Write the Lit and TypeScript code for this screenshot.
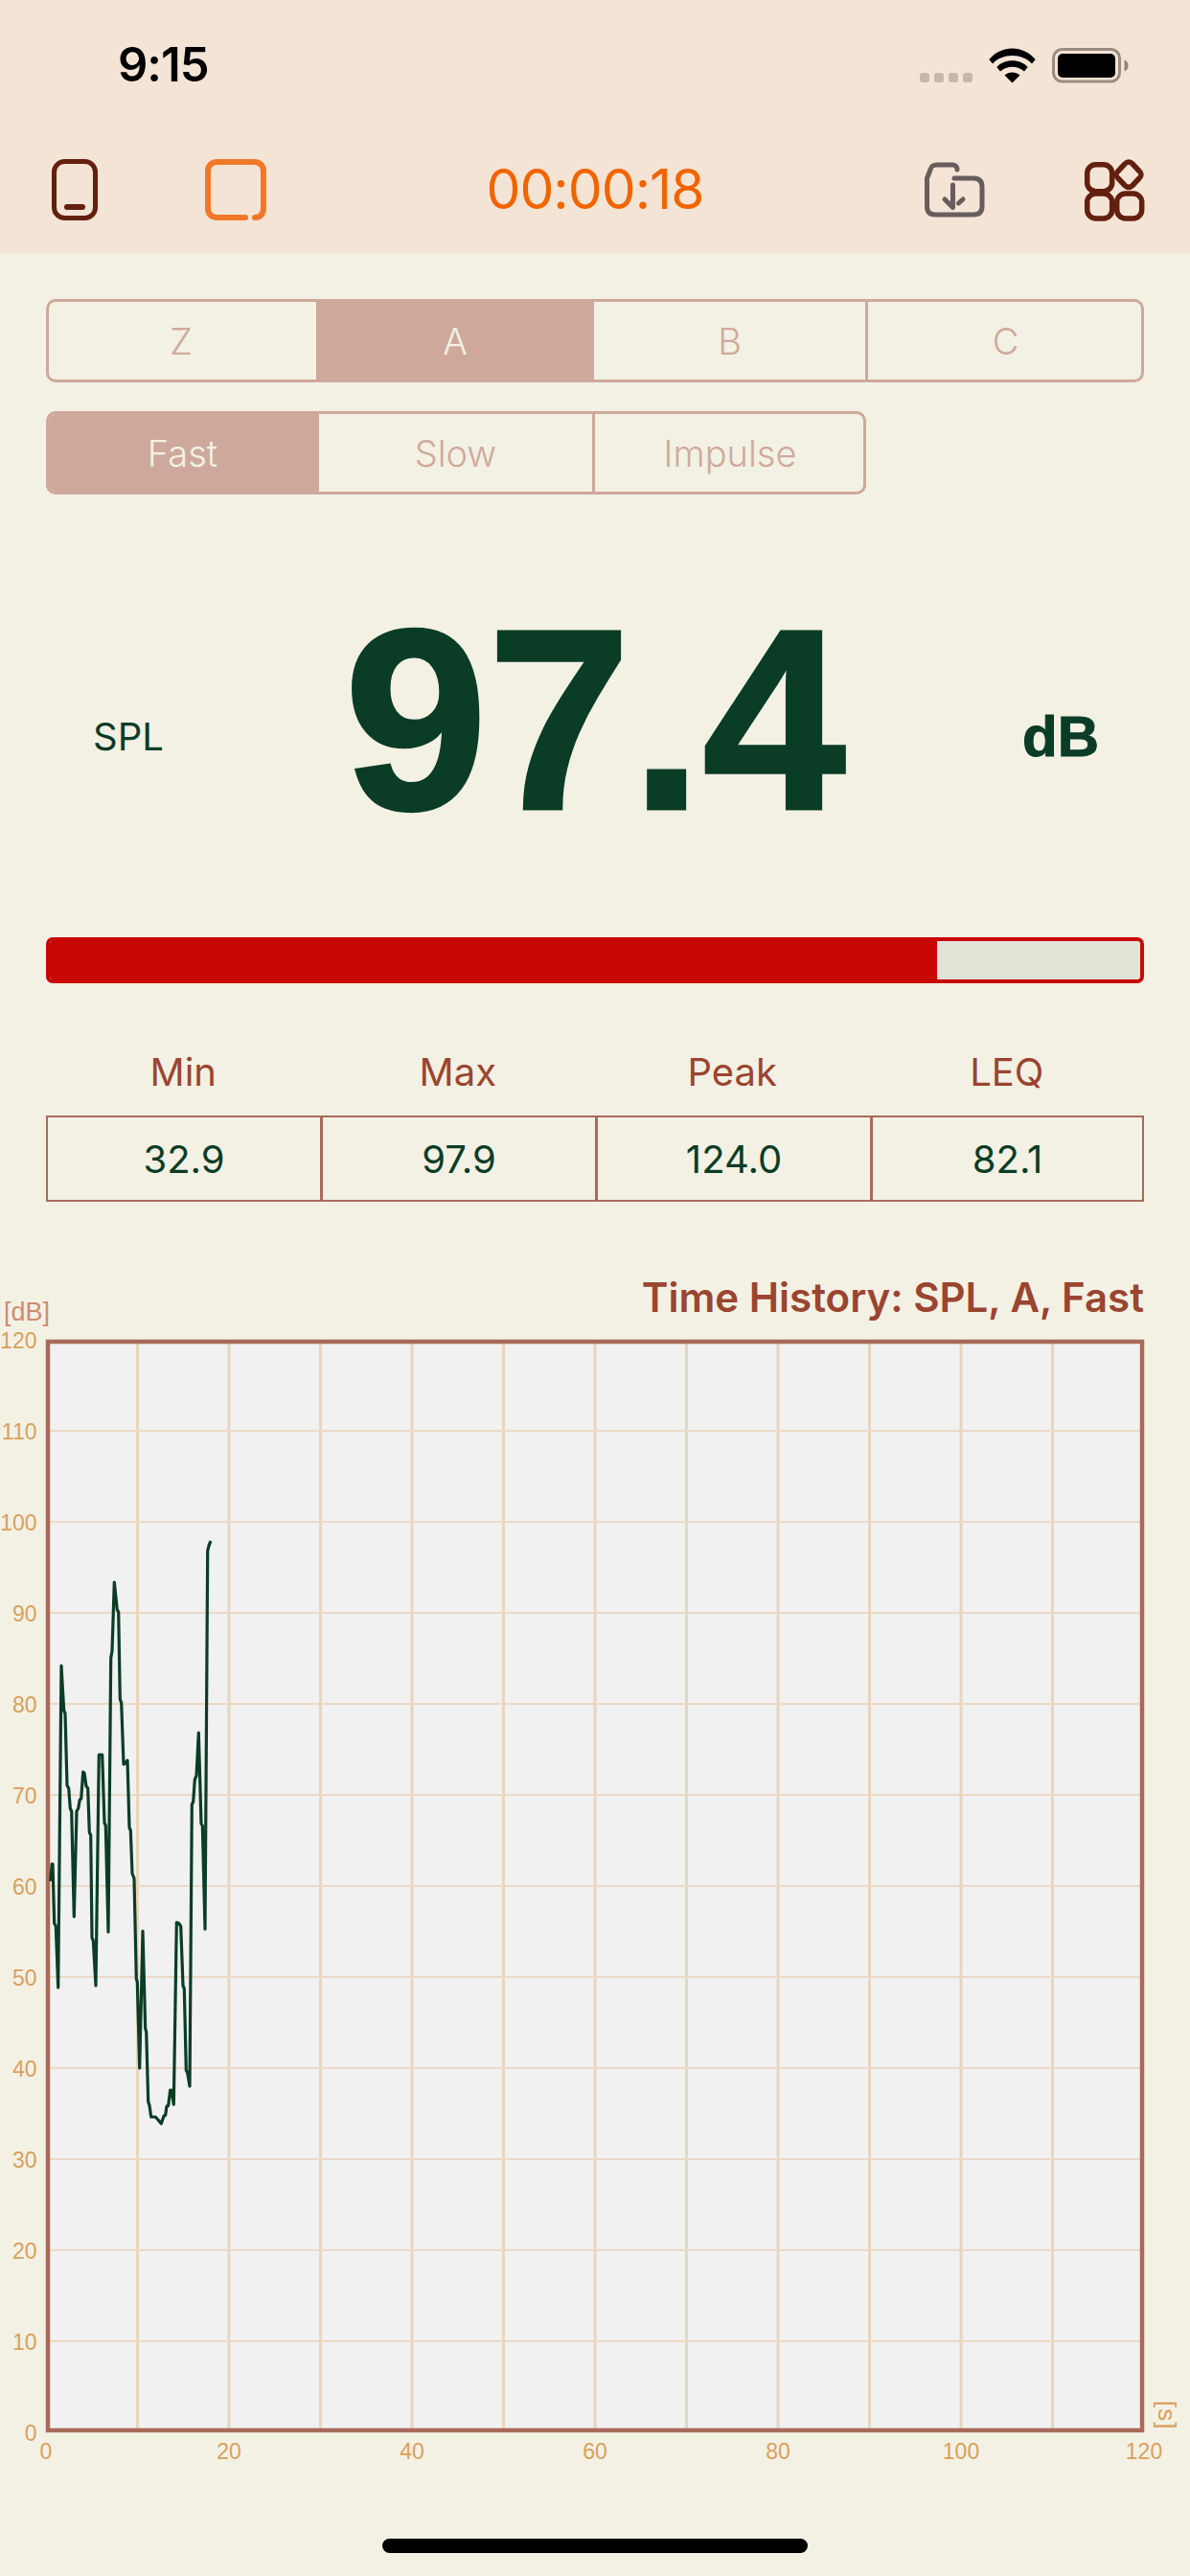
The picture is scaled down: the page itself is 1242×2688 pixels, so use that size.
import { LitElement, html, css, svg } from "lit";
import { customElement } from "lit/decorators.js";

const TRACE: [number, number][] = [
  [52.7,1963],[54.3,1945],[55,1945],[56.7,2007],[58.3,2010],[60.7,2074],[64,1738],[66.7,1785],[68,1788],[70,1863],
  [71.7,1866],[73.3,1887],[74.7,1890],[77.3,2000],[80,1890],[81.7,1887],[83.3,1878],[84.7,1877],[86.7,1849],[88,1850],
  [90,1864],[91.7,1866],[93.3,1912],[94.7,1915],[96,2022],[97.3,2025],[100,2072],[103.3,1831],[106.7,1831],[109,1902],
  [110.3,1905],[113,2016],[115.7,1730],[117,1723],[119.3,1651],[122.3,1680],[123.7,1682],[125.3,1773],[126.7,1777],[129,1841],
  [130.7,1840],[133,1837],[135,1907],[136.3,1910],[138,1955],[140,1960],[142.3,2065],[143.3,2068],[145.7,2158],[149,2015],
  [151.7,2117],[152.7,2120],[154.7,2193],[156,2197],[157.7,2209],[162.3,2209],[165,2212],[168.3,2216],[171,2208],[172.7,2207],
  [174,2198],[175.7,2197],[177.7,2181],[179,2181],[181.3,2196],[184.3,2006],[186.7,2007],[188.7,2010],[191,2072],[192.3,2075],
  [194.3,2160],[195.7,2163],[198,2177],[200.3,1883],[201.7,1880],[203.3,1857],[205,1853],[207.3,1808],[210,1903],[211.3,1905],
  [214,2013],[216.7,1618],[218.3,1612],[220,1608],
];

const tx = (t: number) => 48 + (t * 95.5) / 10;
const vy = (v: number) => 1398 + (120 - v) * 9.5;

@customElement("app-root")
export class AppRoot extends LitElement {
  static styles = css`
    :host { display: block; width: 1242px; height: 2688px; background: #f3f1e4; font-family: Inter, "Liberation Sans", sans-serif; overflow: hidden; }
    .head { height: 264px; background: #f4e4d6; display: flex; flex-direction: column; }
    .status { height: 136px; display: flex; align-items: center; justify-content: space-between; padding: 0 64px 0 123px; box-sizing: border-box; }
    .time { font-size: 49px; font-weight: 600; color: #000; line-height: 136px; letter-spacing: -1px; }
    .sicons { display: flex; align-items: center; }
    .dots { display: flex; gap: 5px; margin-top: 26px; margin-right: 17px; }
    .dots i { display: block; width: 10px; height: 10px; background: #c5b8aa; border-radius: 3px; }
    .bat { margin-left: 17px; display: block; }
    .bar-tool { height: 128px; display: grid; grid-template-columns: 1fr auto 1fr; align-items: center; padding-bottom: 4px; box-sizing: border-box; }
    .tl { display: flex; gap: 112px; padding-left: 54px; align-items: center; }
    .tr { display: flex; gap: 104px; padding-right: 46px; justify-content: flex-end; align-items: center; }
    .tool-ico { display: block; overflow: visible; }
    .timer { font-size: 57px; font-weight: 400; color: #f26400; line-height: 64px; letter-spacing: -1px; }
    .seg { box-sizing: border-box; margin-left: 48px; height: 87px; border: 3px solid #cea99b; border-radius: 10px; overflow: hidden; display: grid; }
    .seg1 { margin-top: 48px; width: 1146px; grid-template-columns: 279px 290px 283px 288px; }
    .seg2 { margin-top: 30px; width: 856px; grid-template-columns: 282px 285px 283px; }
    .cell { display: flex; align-items: center; justify-content: center; font-size: 38px; font-weight: 300; color: #cfaa9c; box-sizing: border-box; }
    .cell.on { background: #cea99b; color: #f3f1e4; }
    .cell.div { border-left: 3px solid #cea99b; padding-left: 2px; }
    .cell.lead { padding-right: 3px; }
    .reading { height: 462px; display: grid; grid-template-columns: 1fr auto 1fr; align-items: center; }
    .spl { font-size: 40px; color: #0b3d26; padding-left: 97px; padding-top: 42px; }
    .big { font-family: "Liberation Sans", sans-serif; font-size: 269px; font-weight: 700; color: #0b3d26; line-height: 300px; -webkit-text-stroke: 3px #0b3d26; padding-top: 8px; }
    .db { font-family: "Liberation Sans", sans-serif; font-size: 60px; font-weight: 700; color: #0b3d26; justify-self: end; padding-right: 95px; padding-top: 42px; -webkit-text-stroke: 1px #0b3d26; }
    .meter { margin: 0 48px; height: 48px; box-sizing: border-box; border: 4px solid #c70703; border-radius: 7px; background: #e2e3d6; overflow: hidden; }
    .fill { height: 100%; background: #c70703; }
    .labels { margin: 0 48px; height: 138px; box-sizing: border-box; padding-top: 69px; display: grid; grid-template-columns: repeat(4, 1fr); }
    .labels span { text-align: center; font-size: 40px; line-height: 48px; color: #9a4530; }
    .table { margin: 0 48px; height: 90px; box-sizing: border-box; border: 2px solid #a96a5a; display: grid; grid-template-columns: 284px 287px 287px 284px; }
    .table span { display: flex; align-items: center; justify-content: center; font-size: 40px; color: #0b3d26; box-sizing: border-box; }
    .table span + span { border-left: 3px solid #a96a5a; }
    .chart-head { display: flex; justify-content: space-between; align-items: flex-start; padding: 77px 48px 0 4px; height: 132px; box-sizing: border-box; }
    .unit { font-family: "Liberation Sans", sans-serif; font-size: 27px; color: #d08b70; margin-top: 24px; line-height: 28px; }
    .title { font-size: 42px; font-weight: 600; color: #9a4530; line-height: 46px; }
    .plot { display: block; width: 1242px; height: 1194px; }
    .ax { font-family: "Liberation Sans", sans-serif; font-size: 23px; fill: #d9a05b; }
    .axs { font-family: "Liberation Sans", sans-serif; font-size: 26px; fill: #d9a05b; letter-spacing: 1px; }
    .home { width: 444px; height: 15px; border-radius: 8px; background: #000; margin: 69px auto 0; }
  `;

  private plot() {
    const vt = Array.from({ length: 11 }, (_, i) => (i + 1) * 10);
    const hz = Array.from({ length: 11 }, (_, i) => (i + 1) * 10);
    const yl = Array.from({ length: 13 }, (_, i) => i * 10);
    const xl = [0, 20, 40, 60, 80, 100, 120];
    return html`<svg class="plot" viewBox="0 1386 1242 1194">
      <rect x="48" y="1398" width="1146" height="1140" fill="#f1f1f1"></rect>
      ${vt.map((t) => svg`<line x1=${tx(t)} x2=${tx(t)} y1="1400" y2="2536" stroke="#e8d5bd" stroke-width="3"></line>`)}
      ${hz.map((v) => svg`<line x1="50" x2="1192" y1=${vy(v)} y2=${vy(v)} stroke="#ebd9c6" stroke-width="2"></line>`)}
      <rect x="50" y="1400" width="1142" height="1136" fill="none" stroke="#a96a5a" stroke-width="4.5"></rect>
      <polyline points=${TRACE.map((p) => p.join(",")).join(" ")} fill="none" stroke="#0b3d26" stroke-width="3.2" stroke-linejoin="round"></polyline>
      ${yl.map((v) => svg`<text class="ax" x="38.5" y=${vy(v) + 9} text-anchor="end">${v}</text>`)}
      ${xl.map((t) => svg`<text class="ax" x=${tx(t)} y="2566" text-anchor="middle">${t}</text>`)}
      <text class="axs" transform="translate(1209 2505) rotate(90)">[s]</text>
    </svg>`;
  }

  render() {
    return html`
      <div class="head">
        <div class="status">
          <span class="time">9:15</span>
          <div class="sicons">
            <div class="dots"><i></i><i></i><i></i><i></i></div>
            <svg width="49" height="37" viewBox="0 0 49 37">
              <path d="M0.3 12C13-3.5 36-3.5 48.700 12L45 16.500C35 5 14 5 4 16.500Z"></path>
              <path d="M8.300 20C16 11 33 11 40.700 20L37 24.500C30 18 19 18 12 24.500Z"></path>
              <path d="M16.500 28.500C21 24.500 28 24.500 32.500 28.500L24.500 36.500Z"></path>
            </svg>
            <svg class="bat" width="80" height="37" viewBox="0 0 80 37">
              <rect x="1.500" y="1.500" width="69" height="33.500" rx="9" fill="none" stroke="#9a8c80" stroke-width="3"></rect>
              <rect x="6" y="6" width="60" height="25" rx="5"></rect>
              <path d="M75.500 12.500C78 13.500 79.500 15.500 79.500 18.500S78 23.500 75.500 24.500Z" fill="#8f8277"></path>
            </svg>
          </div>
        </div>
        <div class="bar-tool">
          <div class="tl">
            <svg class="tool-ico" width="48" height="64" viewBox="0 0 48 64" fill="none" stroke="#63200f" stroke-width="5" stroke-linecap="round">
              <rect x="2.500" y="2.500" width="43" height="59" rx="11"></rect>
              <line x1="16" y1="50" x2="32" y2="50" stroke-width="6"></line>
            </svg>
            <svg class="tool-ico" width="64" height="64" viewBox="0 0 64 64" fill="none" stroke="#f07828" stroke-width="6" stroke-linecap="round">
              <path d="M42 61H13C6.500 61 3 57.500 3 51V13C3 6.500 6.500 3 13 3H51C57.500 3 61 6.500 61 13V51C61 57.500 57.500 61 52 61"></path>
            </svg>
          </div>
          <span class="timer">00:00:18</span>
          <div class="tr">
            <svg class="tool-ico" width="64" height="58" viewBox="0 0 64 58" fill="none" stroke="#675d5c" stroke-width="5" stroke-linecap="round" stroke-linejoin="round">
              <path d="M35 8C35 5 33 3 30 3H14C10 3 8 4 7 8L3.500 17V46C3.500 52 6 55 12 55H52C58 55 61 52 61 46V26C61 20 58 17 52 17H32"></path>
              <path d="M30.500 24V47M22 39L30.500 47.500M36.500 43L41 39"></path>
            </svg>
            <svg class="tool-ico" width="64" height="64" viewBox="0 0 64 64" fill="none" stroke="#63200f" stroke-width="5.500" stroke-linejoin="round">
              <rect x="2.700" y="5.700" width="26" height="28" rx="9"></rect>
              <rect x="2.700" y="36" width="26" height="26" rx="9"></rect>
              <rect x="33.700" y="36" width="26" height="26" rx="9"></rect>
              <path d="M42 5L35 12.500C32 15.500 32 17 35 20L42 27.500C44.500 30 47.500 30 50 27.500L57 20C60 17 60 15.500 57 12.500L50 5C47.500 2.300 44.500 2.300 42 5Z"></path>
            </svg>
          </div>
        </div>
      </div>
      <div class="seg seg1">
        <div class="cell lead">Z</div><div class="cell on">A</div><div class="cell">B</div><div class="cell div">C</div>
      </div>
      <div class="seg seg2">
        <div class="cell on lead">Fast</div><div class="cell">Slow</div><div class="cell div">Impulse</div>
      </div>
      <div class="reading">
        <span class="spl">SPL</span><span class="big">97.4</span><span class="db">dB</span>
      </div>
      <div class="meter"><div class="fill" style=${`width:${(926 / 1138) * 100}%`}></div></div>
      <div class="labels"><span>Min</span><span>Max</span><span>Peak</span><span>LEQ</span></div>
      <div class="table"><span>32.9</span><span>97.9</span><span>124.0</span><span>82.1</span></div>
      <div class="chart-head"><span class="unit">[dB]</span><span class="title">Time History: SPL, A, Fast</span></div>
      ${this.plot()}
      <div class="home"></div>
    `;
  }
}
